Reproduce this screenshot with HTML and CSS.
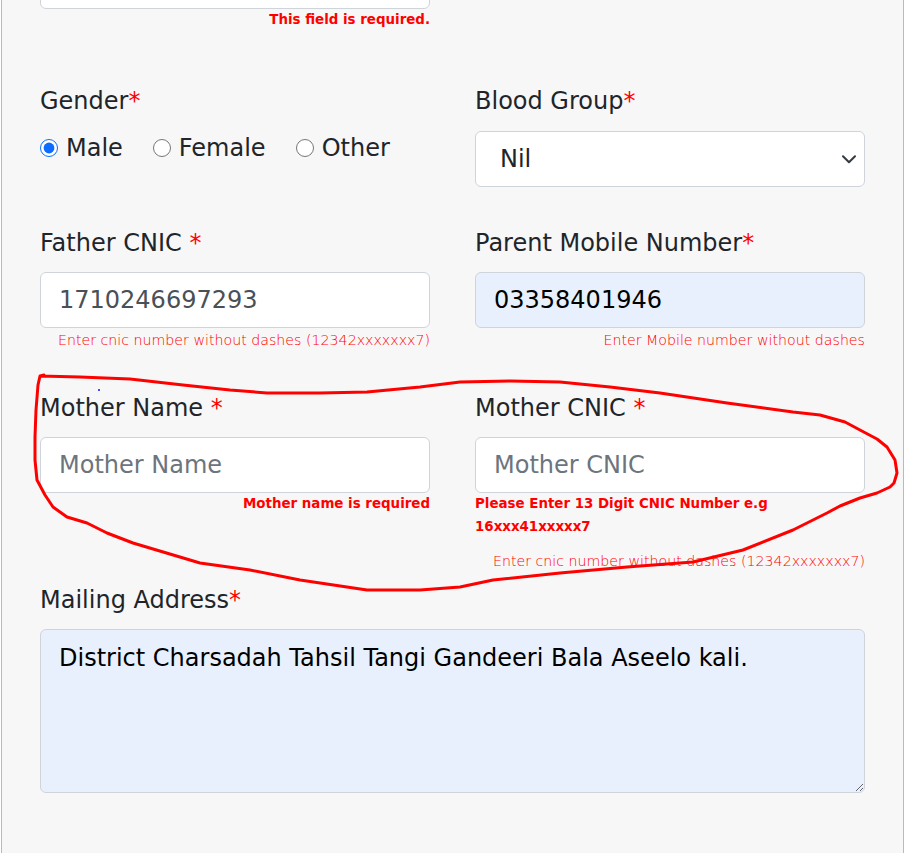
FILE: index.html
```html
<!DOCTYPE html>
<html lang="en">
<head>
<meta charset="utf-8">
<title>Student form</title>
<link rel="stylesheet" href="styles.css">
</head>
<body>
<div class="page">
  <div class="panel">
    <div class="grid row-top">
      <div class="field">
        <input class="control partial" type="text" value="">
        <div class="err err-right">This field is required.</div>
      </div>
      <div class="field"></div>
    </div>

    <div class="grid row-gender">
      <div class="field">
        <label class="lbl">Gender<span class="req">*</span></label>
        <div class="radios">
          <label class="radio"><input type="radio" name="gender" checked><span>Male</span></label>
          <label class="radio"><input type="radio" name="gender"><span>Female</span></label>
          <label class="radio"><input type="radio" name="gender"><span>Other</span></label>
        </div>
      </div>
      <div class="field">
        <label class="lbl">Blood Group<span class="req">*</span></label>
        <div class="control select">
          <span>Nil</span>
          <svg class="chev" width="14" height="9" viewBox="0 0 14 9"><path d="M1 1.2 L7 7.2 L13 1.2" fill="none" stroke="#343a40" stroke-width="2" stroke-linecap="round" stroke-linejoin="round"/></svg>
        </div>
      </div>
    </div>

    <div class="grid row-father">
      <div class="field">
        <label class="lbl">Father CNIC <span class="req">*</span></label>
        <input class="control value-grey" type="text" value="1710246697293">
        <div class="help">Enter cnic number without dashes (12342xxxxxxx7)</div>
      </div>
      <div class="field">
        <label class="lbl">Parent Mobile Number<span class="req">*</span></label>
        <input class="control autofill" type="text" value="03358401946">
        <div class="help">Enter Mobile number without dashes</div>
      </div>
    </div>

    <div class="grid row-mother">
      <div class="field">
        <label class="lbl">Mother Name <span class="req">*</span></label>
        <input class="control" type="text" placeholder="Mother Name">
        <div class="err err-right">Mother name is required</div>
      </div>
      <div class="field">
        <label class="lbl">Mother CNIC <span class="req">*</span></label>
        <input class="control" type="text" placeholder="Mother CNIC">
        <div class="err">Please Enter 13 Digit CNIC Number e.g<br>16xxx41xxxxx7</div>
        <div class="help help-gap">Enter cnic number without dashes (12342xxxxxxx7)</div>
      </div>
    </div>

    <div class="row-mail">
      <label class="lbl">Mailing Address<span class="req">*</span></label>
      <textarea class="control area autofill">District Charsadah Tahsil Tangi Gandeeri Bala Aseelo kali.</textarea>
    </div>
  </div>

  <svg class="scribble" width="919" height="853" viewBox="0 0 919 853">
    <polyline fill="none" stroke="#ff0000" stroke-width="3" stroke-linecap="round" stroke-linejoin="round"
      points="40,376 80,377 130,379 183,385 230,390 267,393 320,393 367,392 420,387 460,382 510,381 560,382 610,387 660,393 727,403 793,412 820,415 845,422 860,430 877,439 887,447 895,460 897,473 894,483 890,487 877,493 860,498 840,506 827,513 793,530 743,550 693,562 627,567 560,573 493,580 460,587 420,590 367,590 300,580 250,570 200,563 133,543 107,533 87,523 67,517 53,507 45,495 37,480 35,460 35,437 36,410 38,385 40,376 44,375"/>
    <circle cx="99" cy="390" r="1" fill="#1010ff"/>
  </svg>
</div>
</body>
</html>
```

FILE: styles.css
```css
* { box-sizing: border-box; }

html, body {
  margin: 0;
  padding: 0;
  background: #ffffff;
}

body {
  font-family: "DejaVu Sans", sans-serif;
  color: #212529;
}

.page {
  position: relative;
  width: 919px;
  height: 853px;
  overflow: hidden;
}

.panel {
  display: flow-root;
  margin-left: 1px;
  width: 903px;
  min-height: 853px;
  background: #f7f7f7;
  border-left: 1px solid #b3c78a;
  border-right: 1px solid #b3c78a;
  padding: 0 38px;
}

.grid {
  display: grid;
  grid-template-columns: 390px 390px;
  column-gap: 45px;
}

.field {
  display: flex;
  flex-direction: column;
}

.row-top { margin-top: -47px; }
.row-gender { margin-top: 51px; }
.row-father { margin-top: 37px; }
.row-mother { margin-top: 38px; }
.row-mail { margin-top: 8px; display: flex; flex-direction: column; }

.lbl {
  display: block;
  font-size: 24px;
  line-height: 36px;
  height: 37px;
  margin-bottom: 11px;
  color: #212529;
}

.row-father .lbl,
.row-mother .lbl,
.row-mail .lbl { padding-top: 1px; }

.req { color: #ff0000; }

.control {
  display: block;
  width: 100%;
  height: 56px;
  padding: 0 18px;
  font-family: "DejaVu Sans", sans-serif;
  font-size: 24px;
  line-height: 36px;
  color: #212529;
  background: #ffffff;
  border: 1px solid #cfd4da;
  border-radius: 6px;
  outline: none;
  margin: 0;
}

.control::placeholder { color: #6c757d; opacity: 1; }

.value-grey { color: #495057; }

.autofill { background: #e8f0fe; color: #000000; }

.select {
  display: flex;
  align-items: center;
  justify-content: space-between;
  padding: 1px 8px 0 24px;
}

.chev { display: block; }

.area {
  height: 164px;
  padding: 10px 18px;
  resize: vertical;
}

.radios {
  display: flex;
  align-items: center;
  height: 36px;
  margin-top: -1px;
}

.radio {
  display: flex;
  align-items: center;
  gap: 8px;
  font-size: 24px;
  line-height: 36px;
  margin-right: 30px;
}

.radio input {
  width: 18px;
  height: 18px;
  margin: 0;
  accent-color: #0b6cff;
}

.err {
  font-size: 13.4px;
  line-height: 22.5px;
  font-weight: bold;
  color: #ff0000;
}

.err-right { text-align: right; }

.help {
  font-size: 14.2px;
  line-height: 22.5px;
  font-weight: 300;
  color: #ff0000;
  text-align: right;
  padding-top: 1px;
}

.help-gap { margin-top: 11px; }

.scribble {
  position: absolute;
  left: 0;
  top: 0;
  pointer-events: none;
}
```
